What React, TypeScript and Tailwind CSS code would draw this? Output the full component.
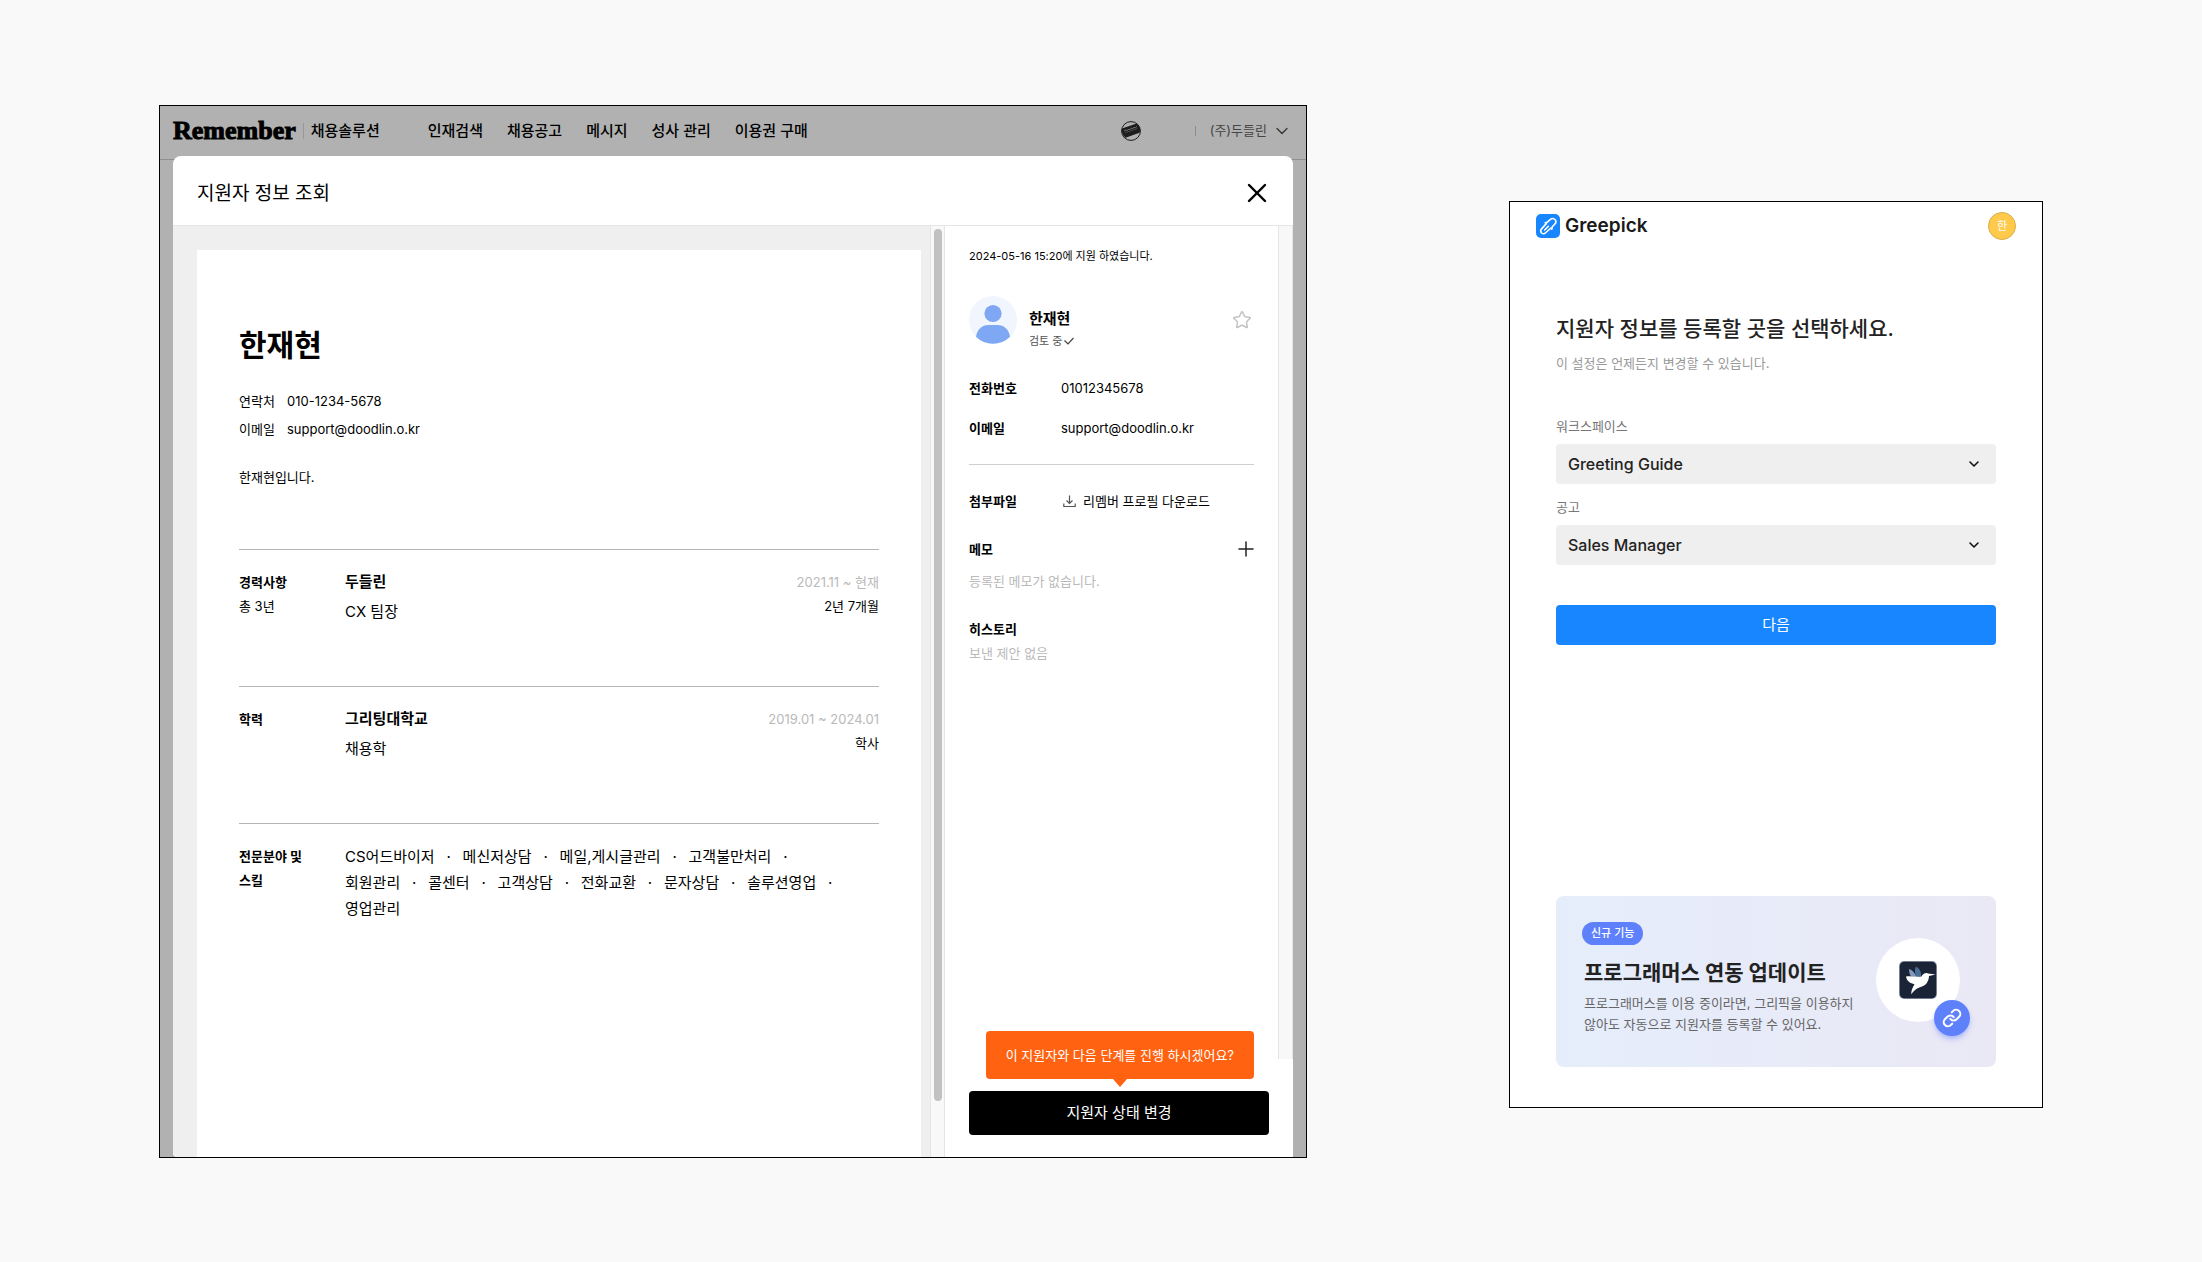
import type { ReactNode } from "react";
import { ChevronDown, Plus, Star, X } from "lucide-react";

const NAV = ["인재검색", "채용공고", "메시지", "성사 관리", "이용권 구매"];

const SKILLS = [
  "CS어드바이저",
  "메신저상담",
  "메일,게시글관리",
  "고객불만처리",
  "회원관리",
  "콜센터",
  "고객상담",
  "전화교환",
  "문자상담",
  "솔루션영업",
  "영업관리",
];

function CompanyMark() {
  return (
    <svg viewBox="0 0 20 20" className="size-5" aria-hidden="true">
      <circle cx="10" cy="10" r="9.4" fill="none" stroke="#1c1c1c" strokeWidth="1" />
      <path d="M1 7.6 15.6 2.5 18.6 6 19.3 9.5 18.5 11.8 4.6 16.8 2 14 .7 10.5Z" fill="#1c1c1c" />
      <path
        d="M3 10.2 5 8.8 6 9.8 7.6 8 8.6 9 10.4 7 11.6 8 13.2 6 14.2 7 16 5.4"
        fill="none"
        stroke="#8a8a8a"
        strokeWidth=".8"
      />
      <path d="M4 11.8 16.4 7.6" fill="none" stroke="#666" strokeWidth=".6" />
    </svg>
  );
}

function ProfileFigure() {
  return (
    <svg viewBox="0 0 48 48" className="size-12 shrink-0" aria-hidden="true">
      <circle cx="24" cy="24" r="24" fill="#f1f6fe" />
      <circle cx="24" cy="17.5" r="8.6" fill="#7ea7f4" />
      <path d="M7 40.8C8 33.500 13 29 19.500 29h9C35 29 40 33.500 41 40.800A24 24 0 0 1 7 40.800Z" fill="#7ea7f4" />
    </svg>
  );
}

function GreepickMark() {
  return (
    <svg viewBox="0 0 24 24" className="size-6" aria-hidden="true">
      <rect width="24" height="24" rx="5" fill="#1886ff" />
      <g fill="none" stroke="#fff" strokeWidth="1.600" strokeLinecap="round" strokeLinejoin="round">
        <path d="M9.200 8.800 11 8.400 14.200 5.600C16 4.200 18 4.400 19.200 5.800 20.300 7.200 20 9 18.700 10.300L16.300 12.800 15.800 15.200" />
        <path d="M10.300 9.600 5.800 14.600C4.600 16 4.500 18 5.600 19 6.800 20 8.600 19.800 9.900 18.500L15 14" />
        <path d="M8.700 16 12.400 12.300" />
      </g>
    </svg>
  );
}

function HummingbirdTile() {
  return (
    <svg viewBox="0 0 38 38" className="size-[38px]" aria-hidden="true">
      <rect width="38" height="38" rx="5" fill="#8d97a8" />
      <rect x=".8" y=".8" width="36.400" height="36.400" rx="4.500" fill="#1b2436" />
      <path d="M10 8C13.500 9 16 12 17.500 16L12 15.500C10.500 13 10 10.500 10 8Z" fill="#8099bd" />
      <path d="M17 5.500C21 8 22.500 11.500 22 15.500L17.500 16C15.500 12 15.500 8.500 17 5.500Z" fill="#4a6f96" />
      <path
        d="M7 15.500C12 15 18 16.200 22.500 15.500 24 12.800 26.500 11.300 29 12.500L36.500 13.500 30 15C29.800 21 26.500 25 21 26.200 17.500 27 15 29.500 12.200 33.200 12.300 29.500 13.500 26.500 15.500 23.200 11.500 22.500 7.500 20 7 15.500Z"
        fill="#fff"
      />
    </svg>
  );
}

function ResumeSection({ title, note, children }: { title: string; note?: string; children: ReactNode }) {
  return (
    <section className="flex min-h-[137px] border-t border-[#b5b5b5]">
      <div className="w-[106px] shrink-0 pt-5 pr-8 text-[13px] leading-6">
        <h3 className="font-bold break-keep">{title}</h3>
        {note && <p>{note}</p>}
      </div>
      {children}
    </section>
  );
}

function ResumeEntry(props: { name: string; detail: string; period: string; extra: string }) {
  return (
    <div className="flex flex-1 justify-between">
      <div className="pt-[17px] text-[15px] leading-[30px]">
        <p className="font-bold">{props.name}</p>
        <p>{props.detail}</p>
      </div>
      <div className="pt-5 text-right text-[13px] leading-6">
        <p className="text-[#b9b9b9]">{props.period}</p>
        <p>{props.extra}</p>
      </div>
    </div>
  );
}

function Resume() {
  return (
    <div className="min-w-0 flex-1 bg-[#efefef] pt-6 pr-[9px] pl-6">
      <article className="h-full bg-white px-[42px] pt-[75px]">
        <h2 className="text-3xl leading-10 font-bold">한재현</h2>
        <dl className="mt-[22px] grid grid-cols-[48px_1fr] text-[13px] leading-7">
          <dt>연락처</dt>
          <dd>010-1234-5678</dd>
          <dt>이메일</dt>
          <dd>support@doodlin.o.kr</dd>
        </dl>
        <p className="mt-5 mb-[58px] text-[13px] leading-7">한재현입니다.</p>
        <ResumeSection title="경력사항" note="총 3년">
          <ResumeEntry name="두들린" detail="CX 팀장" period="2021.11 ~ 현재" extra="2년 7개월" />
        </ResumeSection>
        <ResumeSection title="학력">
          <ResumeEntry name="그리팅대학교" detail="채용학" period="2019.01 ~ 2024.01" extra="학사" />
        </ResumeSection>
        <ResumeSection title="전문분야 및 스킬">
          <ul className="flex max-w-[508px] flex-wrap content-start pt-5 text-[15px] leading-[26px]">
            {SKILLS.map((skill, i) => (
              <li key={skill} className="flex">
                {skill}
                {i < SKILLS.length - 1 && <span className="w-7 text-center">·</span>}
              </li>
            ))}
          </ul>
        </ResumeSection>
      </article>
    </div>
  );
}

function ApplicantPanel() {
  return (
    <aside className="flex w-[348px] shrink-0 flex-col bg-white">
      <div className="flex flex-1">
        <div className="min-w-0 flex-1 pt-5 pr-6 pl-6 text-[13px] leading-6">
          <p className="text-[11px] leading-5">2024-05-16 15:20에 지원 하였습니다.</p>
          <div className="mt-[30px] flex gap-3">
            <ProfileFigure />
            <div className="flex-1 pt-[11px]">
              <h2 className="text-[15px] leading-6 font-bold">한재현</h2>
              <p className="flex items-center gap-px text-[11px] leading-5 text-[#555]">
                검토 중
                <svg viewBox="0 0 12 12" className="size-3" aria-hidden="true">
                  <path d="M1.500 5.500 5 9 10.500 3" fill="none" stroke="#444" strokeWidth="1.200" />
                </svg>
              </p>
            </div>
            <button type="button" aria-label="관심 지원자" className="mt-3.5 mr-0.5 size-5">
              <Star className="size-5 text-[#c4c4c4]" strokeWidth={1.8} />
            </button>
          </div>
          <dl className="mt-[25px] grid grid-cols-[92px_1fr] gap-y-4">
            <dt className="font-bold">전화번호</dt>
            <dd>01012345678</dd>
            <dt className="font-bold">이메일</dt>
            <dd>support@doodlin.o.kr</dd>
          </dl>
          <hr className="mt-6 border-[#cfcfcf]" />
          <div className="mt-6 grid grid-cols-[92px_1fr]">
            <h3 className="font-bold">첨부파일</h3>
            <a href="#download" className="flex items-center gap-1.5">
              <svg viewBox="0 0 16 16" className="size-4" fill="none" stroke="#555" strokeWidth="1.200" aria-hidden="true">
                <path d="M8.500 2.500v8M5.500 7.500l3 3 3-3M2.800 10.500v3h11.400v-3" />
              </svg>
              리멤버 프로필 다운로드
            </a>
          </div>
          <div className="mt-6 flex items-center justify-between">
            <h3 className="font-bold">메모</h3>
            <button type="button" aria-label="메모 추가" className="-mr-1">
              <Plus className="size-6 text-[#222]" strokeWidth={1.5} />
            </button>
          </div>
          <p className="mt-2 text-[#b9b9b9]">등록된 메모가 없습니다.</p>
          <h3 className="mt-6 font-bold">히스토리</h3>
          <p className="text-[#b9b9b9]">보낸 제안 없음</p>
        </div>
        <div className="w-[15px] shrink-0 border-x border-[#e5e5e5] bg-[#f8f8f8]" />
      </div>
      <footer className="relative px-6 pt-8 pb-[22px]">
        <p className="absolute right-[39px] bottom-[78px] rounded bg-[#ff6210] px-5 text-[13px] leading-[48px] whitespace-nowrap text-white">
          이 지원자와 다음 단계를 진행 하시겠어요?
          <span className="absolute top-full left-1/2 -translate-x-1/2 border-x-[7px] border-t-8 border-x-transparent border-t-[#ff6210]" />
        </p>
        <button type="button" className="h-11 w-full rounded bg-black text-[15px] text-white">
          지원자 상태 변경
        </button>
      </footer>
    </aside>
  );
}

function RememberWindow() {
  return (
    <main className="flex min-h-[1053px] min-w-0 flex-[1146] flex-col overflow-hidden border border-black bg-[#b1b1b1]">
      <header className="flex h-[54px] items-center border-b border-[#8f8f8f] pr-3.5 pb-[3px] pl-[13px] text-[15px]">
        <a href="#home" className="flex items-center">
          <span className="font-['Liberation_Serif'] text-[26px] leading-6 font-black [-webkit-text-stroke:1px_black]">
            Remember
          </span>
          <span className="mx-[7px] h-4 w-px bg-[#989898]" />
          <span className="font-medium">채용솔루션</span>
        </a>
        <nav className="ml-12 flex gap-6 font-medium">
          {NAV.map((label) => (
            <a key={label} href="#nav">
              {label}
            </a>
          ))}
        </nav>
        <div className="ml-auto flex items-center">
          <CompanyMark />
          <span className="mr-[14px] ml-[54px] h-2.5 w-px bg-[#8c8c8c]" />
          <button type="button" className="flex items-center gap-[5px] text-[13px] text-[#444]">
            (주)두들린
            <ChevronDown className="size-5 text-[#333]" strokeWidth={1.5} />
          </button>
        </div>
      </header>
      <section className="relative mx-[13px] -mt-1 flex flex-1 flex-col overflow-hidden rounded-t-lg rounded-bl-sm bg-white">
        <header className="flex h-[70px] items-center justify-between border-b border-[#e5e5e5] pt-1 pr-5 pl-6">
          <h1 className="pt-0.5 text-[19px] leading-7">지원자 정보 조회</h1>
          <button type="button" aria-label="닫기">
            <X className="size-8" strokeWidth={1.8} />
          </button>
        </header>
        <div className="flex flex-1">
          <Resume />
          <div className="w-[15px] shrink-0 border-x border-[#e5e5e5] bg-[#f8f8f8] px-px pt-[3px]">
            <div className="mx-auto h-[94%] w-2 rounded-full bg-[#c1c1c1]" />
          </div>
          <ApplicantPanel />
        </div>
      </section>
    </main>
  );
}

function SelectField({ id, label, value }: { id: string; label: string; value: string }) {
  return (
    <div className="flex flex-col gap-2">
      <label htmlFor={id} className="text-[13px] leading-5 text-[#777]">
        {label}
      </label>
      <div className="relative">
        <select
          id={id}
          defaultValue={value}
          className="h-10 w-full appearance-none rounded bg-[#efefef] px-3 text-base font-medium text-[#222]"
        >
          <option>{value}</option>
        </select>
        <ChevronDown className="pointer-events-none absolute top-3 right-3.5 size-4 text-[#111]" strokeWidth={2.4} />
      </div>
    </div>
  );
}

function GreepickWindow() {
  return (
    <main className="mt-24 flex min-h-[907px] min-w-0 flex-[532] flex-col border border-black bg-white">
      <header className="flex h-12 items-center justify-between px-[26px]">
        <a href="#greepick" className="flex items-center gap-[5px]">
          <GreepickMark />
          <span className="text-[19px] font-semibold text-[#1a1a1a]">Greepick</span>
        </a>
        <button
          type="button"
          className="size-7 rounded-full border border-[#d9ae47] bg-[#ffca4c] text-[11px] text-white"
        >
          한
        </button>
      </header>
      <div className="flex flex-1 flex-col px-[46px] pt-[63px] pb-10">
        <h1 className="text-[21px] leading-8 font-medium text-[#222]">지원자 정보를 등록할 곳을 선택하세요.</h1>
        <p className="mt-2 text-[13px] leading-5 text-[#999]">이 설정은 언제든지 변경할 수 있습니다.</p>
        <form className="mt-[43px] flex flex-col gap-[13px]">
          <SelectField id="workspace" label="워크스페이스" value="Greeting Guide" />
          <SelectField id="opening" label="공고" value="Sales Manager" />
          <button type="button" className="mt-[27px] h-10 rounded bg-[#1886ff] text-[15px] text-white">
            다음
          </button>
        </form>
        <section className="mt-auto flex items-start justify-between rounded-lg bg-linear-to-r from-[#e5edfb] to-[#eae8f5] pt-[26px] pr-[26px] pb-8 pl-[26px]">
          <div>
            <span className="block w-fit rounded-full bg-[#5e81fb] px-[9px] text-[11px] leading-[23px] font-medium text-white">
              신규 기능
            </span>
            <h2 className="mt-3 pl-0.5 text-[21px] leading-8 font-bold text-[#222]">프로그래머스 연동 업데이트</h2>
            <p className="mt-1 pl-0.5 text-[13px] leading-[21px] whitespace-nowrap text-[#666]">
              프로그래머스를 이용 중이라면, 그리픽을 이용하지
              <br />
              않아도 자동으로 지원자를 등록할 수 있어요.
            </p>
          </div>
          <div className="relative mt-4 mr-2.5 flex size-[84px] shrink-0 items-center justify-center rounded-full bg-white">
            <HummingbirdTile />
            <span className="absolute -right-2.5 -bottom-3.5 flex size-9 items-center justify-center rounded-full bg-[#5e81fb] shadow-md shadow-[#5e81fb]/40">
              <svg viewBox="0 0 24 24" className="size-5" fill="none" stroke="#fff" strokeWidth="2.400" strokeLinecap="round" aria-hidden="true">
                <path d="M10 13a5 5 0 0 0 7.540.540l3-3a5 5 0 0 0-7.070-7.070l-1.720 1.710" />
                <path d="M14 11a5 5 0 0 0-7.540-.540l-3 3a5 5 0 0 0 7.070 7.070l1.710-1.710" />
              </svg>
            </span>
          </div>
        </section>
      </div>
    </main>
  );
}

export default function App() {
  return (
    <div
      lang="ko"
      className="flex min-h-screen items-start gap-[202px] bg-[#f9f9f9] px-[159px] py-[105px] font-['Inter','Noto_Sans_CJK_KR',sans-serif] text-black"
    >
      <RememberWindow />
      <GreepickWindow />
    </div>
  );
}
